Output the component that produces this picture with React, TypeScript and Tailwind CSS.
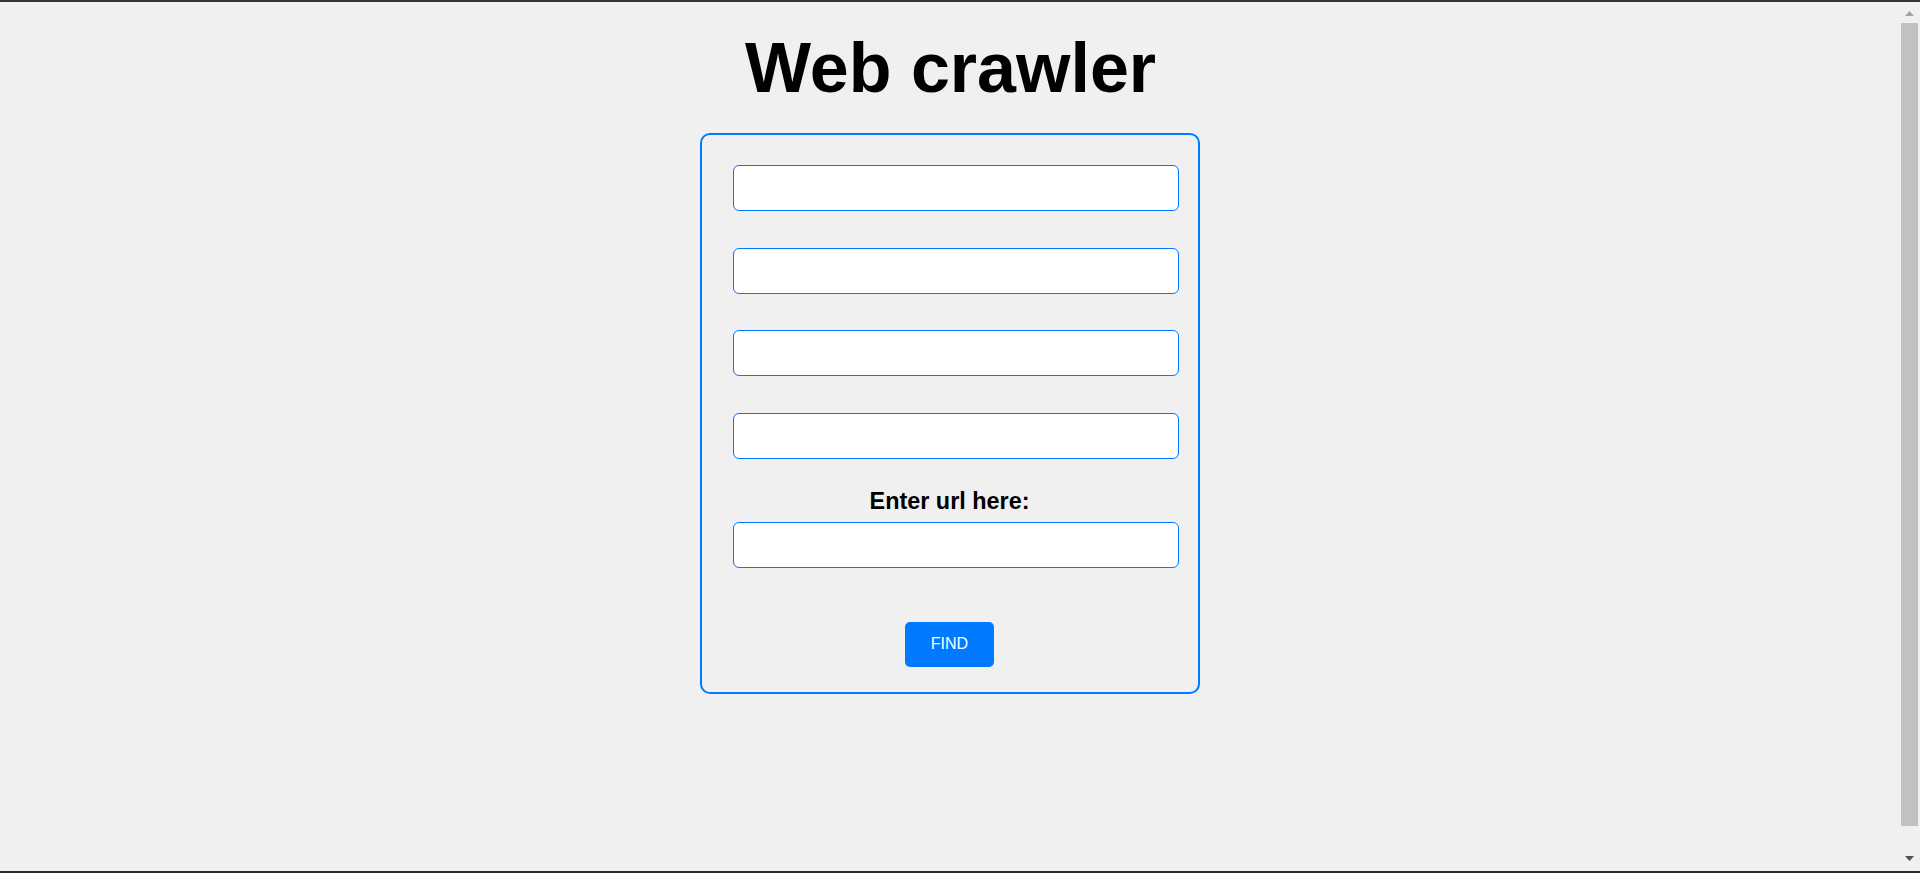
const fields = ['a', 'b', 'c', 'd'];

const ScrollBar = () => (
  <div className="flex w-[19px] flex-col items-start">
    {/* up arrow */}
    <div className="mt-[9px] flex w-[17px] justify-center">
      <svg width="9" height="5" viewBox="0 0 9 5">
        <polygon points="4.5,0 9,5 0,5" fill="#a3a3a3" />
      </svg>
    </div>
    <div className="mt-[7px] h-[803px] w-[17px] bg-[#c1c1c1]" />
    {/* down arrow */}
    <div className="mt-[30px] flex w-[17px] justify-center">
      <svg width="9" height="5" viewBox="0 0 9 5">
        <polygon points="0,0 9,0 4.5,5" fill="#505050" />
      </svg>
    </div>
  </div>
);

const App = () => {
  return (
    <div className="flex h-screen flex-col bg-[#f0f0f0] font-['Liberation_Sans',Arial,sans-serif]">
      <div className="h-[2px] bg-[#363636]" />

      <div className="flex flex-1 overflow-hidden">
        {/* Main Section */}
        <main className="flex flex-1 flex-col items-center">
          <h1 className="mt-[25.5px] text-[70px] font-bold leading-[80px] text-black">
            Web crawler
          </h1>

          <form
            className="mt-[25.5px] mr-[2px] flex w-[500px] flex-col rounded-[10px] border-2 border-[#007bff] px-[30px] pt-[30px] pb-[25px]"
            onSubmit={(e) => e.preventDefault()}
          >
            <div className="flex flex-col gap-[36.67px]">
              {fields.map((f) => (
                <input
                  key={f}
                  type="text"
                  className="ml-[1px] h-[46px] w-[446px] rounded-[6px] border border-[#007bff] bg-white px-2 outline-none"
                />
              ))}
            </div>

            <label className="mt-[29.5px] text-center text-[23.4px] font-bold leading-[26.8px] text-black">
              Enter url here:
            </label>
            <input
              type="text"
              className="mt-[7px] ml-[1px] h-[46px] w-[446px] rounded-[6px] border border-[#007bff] bg-white px-2 outline-none"
            />

            <div className="mt-[53.7px] flex justify-center">
              <button
                type="submit"
                className="h-[44.7px] w-[89px] rounded-[5px] bg-[#007bff] text-[16px] text-white"
              >
                FIND
              </button>
            </div>
          </form>
        </main>

        <ScrollBar />
      </div>

      <div className="h-[2px] bg-[#262b38]" />
    </div>
  );
};

export default App;
